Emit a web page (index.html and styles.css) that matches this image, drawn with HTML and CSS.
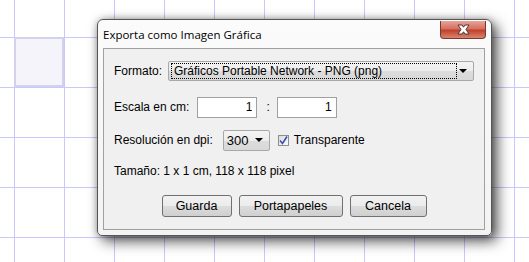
FILE: index.html
```html
<!DOCTYPE html>
<html lang="es">
<head>
  <meta charset="UTF-8" />
  <title>Exporta como Imagen Gráfica</title>
  <link rel="stylesheet" href="styles.css">
</head>
<body>

  <div class="lienzo">
    <div class="celda-activa"></div>

    <div class="ventana">
      <div class="barra-titulo">
        <span class="titulo">Exporta como Imagen Gráfica</span>
        <button class="cerrar" aria-label="Cerrar">
          <svg width="17" height="11" viewBox="0 0 17 11">
            <path d="M3 1 L7 1 L8.5 3.2 L10 1 L14 1 L11 5.5 L14 10 L10 10 L8.5 7.8 L7 10 L3 10 L6 5.5 Z" fill="#fff" stroke="#4a3a3a" stroke-width="1" stroke-linejoin="round"/>
          </svg>
        </button>
      </div>

      <div class="contenido">
        <div class="fila fila-formato">
          <span class="etiqueta">Formato:</span>
          <div class="combo combo-formato">
            <span class="foco">Gráficos Portable Network - PNG (png)</span>
            <span class="flecha"></span>
          </div>
        </div>

        <div class="fila fila-escala">
          <span class="etiqueta">Escala en cm:</span>
          <input class="campo" type="text" value="1">
          <span class="separador">:</span>
          <input class="campo" type="text" value="1">
        </div>

        <div class="fila fila-dpi">
          <span class="etiqueta">Resolución en dpi:</span>
          <div class="combo combo-dpi">
            <span class="valor">300</span>
            <span class="flecha"></span>
          </div>
          <label class="casilla">
            <span class="marca">
              <svg width="9" height="9" viewBox="0 0 9 9">
                <path d="M1 4.5 L3.5 7.5 L8 0.5" fill="none" stroke="#3d4fb5" stroke-width="1.6"/>
              </svg>
            </span>
            Transparente
          </label>
        </div>

        <div class="fila fila-info">
          <span>Tamaño: 1 x 1 cm, 118 x 118 pixel</span>
        </div>

        <div class="botones">
          <button class="btn btn-guarda">Guarda</button>
          <button class="btn btn-porta">Portapapeles</button>
          <button class="btn btn-cancela">Cancela</button>
        </div>
      </div>
    </div>
  </div>

</body>
</html>
```

FILE: styles.css
```css
body {
  margin: 0;
  font-family: 'Liberation Sans', Arial, sans-serif;
  font-size: 12px;
  color: #000;
}

.lienzo {
  position: relative;
  width: 529px;
  height: 262px;
  overflow: hidden;
  background-color: #fff;
  background-image:
    linear-gradient(to right, #c8c8ff 1px, transparent 1px),
    linear-gradient(to bottom, #c8c8ff 1px, transparent 1px);
  background-size: 50px 50px;
  background-position: 14px 37px;
}

.celda-activa {
  position: absolute;
  left: 14px;
  top: 37px;
  width: 46px;
  height: 46px;
  background: #f4f4fa;
  border: 2px solid #d2d2ec;
}

/* ventana del dialogo */
.ventana {
  position: absolute;
  left: 97px;
  top: 19px;
  width: 393px;
  height: 215px;
  display: flex;
  flex-direction: column;
  background: linear-gradient(to bottom, #fbfbfb, #f3f3f3);
  border: 1px solid #555;
  border-radius: 6px 6px 5px 5px;
  box-shadow: 5px 5px 14px rgba(0, 0, 0, 0.7), 0 0 6px rgba(0, 0, 0, 0.25);
}

.barra-titulo {
  display: flex;
  align-items: flex-start;
  justify-content: space-between;
  height: 28px;
  padding-left: 5px;
  padding-right: 5px;
}

.titulo {
  font-family: 'Open Sans', 'Liberation Sans', sans-serif;
  font-size: 11.5px;
  color: #000;
  margin-top: 7px;
}

.cerrar {
  width: 46px;
  height: 18px;
  margin-top: 1px;
  padding: 0;
  display: flex;
  align-items: center;
  justify-content: center;
  border: 1px solid #7a3a30;
  border-top: none;
  border-radius: 0 0 4px 4px;
  background: linear-gradient(to bottom, #e8a49a 0%, #d5705f 45%, #c2402c 55%, #d8856f 100%);
}

.contenido {
  flex: 1;
  margin: 0 6px 5px 5px;
  background: #f0f0f0;
  border: 1px solid #a0a0a0;
  padding: 11px 10px 0 10px;
}

.fila {
  display: flex;
  align-items: center;
}

.fila-formato {
  height: 21px;
}

.fila-escala {
  height: 22px;
  margin-top: 15px;
}

.fila-dpi {
  height: 22px;
  margin-top: 11px;
}

.fila-info {
  height: 16px;
  margin-top: 12px;
}

/* combos */
.combo {
  position: relative;
  display: flex;
  align-items: center;
  border: 1px solid #a8a8a8;
  border-radius: 2px;
  background: linear-gradient(to bottom, #f4f4f4 0%, #ececec 50%, #dcdcdc 51%, #d8d8d8 100%);
}

.combo-formato {
  width: 305px;
  height: 18px;
  margin-left: 6px;
}

.combo-formato .foco {
  margin-left: 2px;
  padding-left: 2px;
  width: 282px;
  height: 14px;
  line-height: 14px;
  border: 1px dotted #000;
  font-size: 12px;
}

.combo-dpi {
  width: 45px;
  height: 19px;
  margin-left: 10px;
  margin-right: 8px;
}

.combo-dpi .valor {
  margin-left: 3px;
  font-size: 13px;
}

.flecha {
  position: absolute;
  right: 6px;
  top: 50%;
  margin-top: -2px;
  border-left: 4px solid transparent;
  border-right: 4px solid transparent;
  border-top: 4px solid #000;
}

/* campos de texto */
.campo {
  width: 54px;
  height: 17px;
  padding: 1px 4px 1px 0;
  border: 1px solid #a0a0a0;
  background: #fff;
  text-align: right;
  font-family: inherit;
  font-size: 12px;
}

.fila-escala .etiqueta {
  margin-right: 8px;
}

.separador {
  margin: 0 7px 0 9px;
}

.casilla {
  display: flex;
  align-items: center;
  gap: 5px;
}

.marca {
  width: 9px;
  height: 9px;
  border: 1px solid #8e8f8f;
  background: linear-gradient(135deg, #dcdcdc, #fafafa);
  display: flex;
  align-items: center;
  justify-content: center;
}

/* botones */
.botones {
  display: flex;
  justify-content: center;
  gap: 7px;
  margin-top: 16px;
}

.btn {
  height: 22px;
  padding: 0;
  border: 1px solid #707070;
  border-radius: 3px;
  background: linear-gradient(to bottom, #f2f2f2 0%, #ebebeb 50%, #dddddd 51%, #cfcfcf 100%);
  font-family: inherit;
  font-size: 12.5px;
  color: #000;
}

.btn-guarda {
  width: 70px;
}

.btn-porta {
  width: 104px;
}

.btn-cancela {
  width: 77px;
}
```
